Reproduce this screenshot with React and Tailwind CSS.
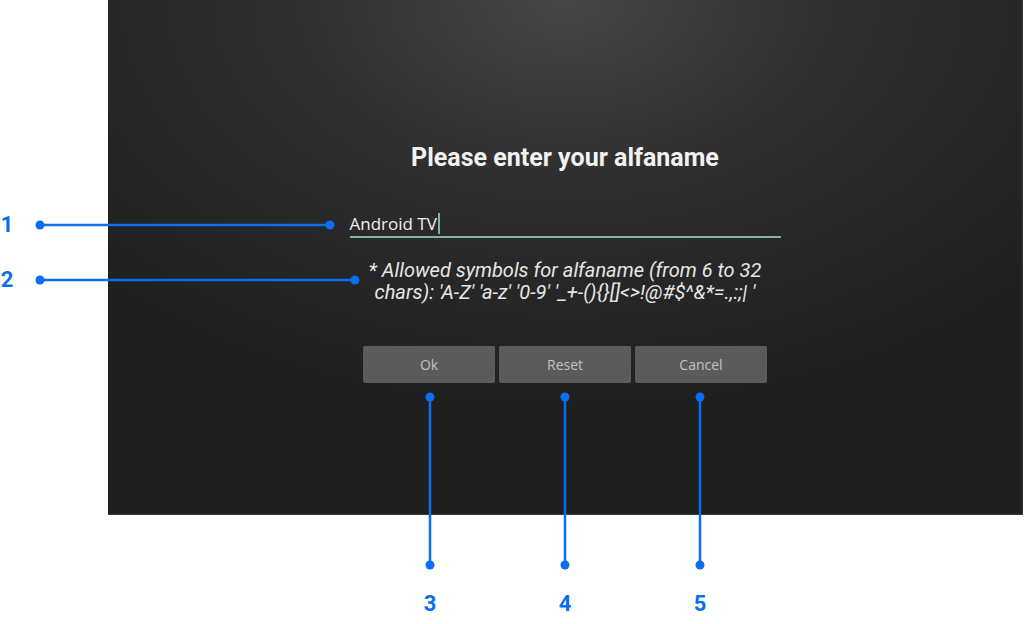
import React from 'react';

const BLUE = '#0a6ef0';

const Callouts = () => (
  <>
    <svg className="absolute left-0 top-0 pointer-events-none" width="1024" height="624">
      <g stroke={BLUE} strokeWidth="2.5" fill={BLUE}>
        <line x1="40" y1="225" x2="330" y2="225" />
        <circle cx="40" cy="225" r="4.5" stroke="none" />
        <circle cx="330" cy="225" r="4.5" stroke="none" />
        <line x1="40" y1="280" x2="355" y2="280" />
        <circle cx="40" cy="280" r="4.5" stroke="none" />
        <circle cx="355" cy="280" r="4.5" stroke="none" />
        {[430, 565, 700].map(x => (
          <g key={x}>
            <line x1={x} y1="397" x2={x} y2="565" />
            <circle cx={x} cy="397" r="4.5" stroke="none" />
            <circle cx={x} cy="565" r="4.5" stroke="none" />
          </g>
        ))}
      </g>
    </svg>
    <div className="absolute left-0 top-[211px] w-[14px] text-center text-[22px] font-bold leading-[28px] text-[#0a6ef0]">1</div>
    <div className="absolute left-0 top-[266px] w-[14px] text-center text-[22px] font-bold leading-[28px] text-[#0a6ef0]">2</div>
    <div className="absolute left-[415px] top-[590px] w-[30px] text-center text-[22px] font-bold leading-[28px] text-[#0a6ef0]">3</div>
    <div className="absolute left-[550px] top-[590px] w-[30px] text-center text-[22px] font-bold leading-[28px] text-[#0a6ef0]">4</div>
    <div className="absolute left-[685px] top-[590px] w-[30px] text-center text-[22px] font-bold leading-[28px] text-[#0a6ef0]">5</div>
  </>
);

const App = () => {
  const buttons = ['Ok', 'Reset', 'Cancel'];
  const symbols = "chars): 'A-Z' 'a-z' '0-9' '_+-(){}[]<>!@#$^&*=.,:;| '";

  return (
    <div className="relative w-[1024px] h-[624px] bg-white overflow-hidden font-['Roboto',sans-serif]">
      <div className="ml-[108px] w-[915px] h-[515px] flex flex-col items-center bg-[radial-gradient(ellipse_70%_80%_at_50%_0%,#464646_0%,#2c2c2c_50%,#1f1f1f_100%)] border-r border-b border-[#3a3a3a]">
        <h1 className="mt-[143px] text-[25px] leading-[30px] font-bold text-[#f2f2f2]">
          Please enter your alfaname
        </h1>

        <div className="mt-[41px] w-[431px] h-[24px] border-b-2 border-[#7fb5a9] flex items-start">
          <span className="font-['Open_Sans',sans-serif] text-[17px] leading-[20px] text-[#eeeeee]">Android TV</span>
          <span className="ml-[1px] w-[2px] h-[21px] -mt-[1px] bg-[#7fb5a9]"></span>
        </div>

        <p className="mt-[21px] text-center italic text-[20px] leading-[22px] text-[#e6e6e6]">
          * Allowed symbols for alfaname (from 6 to 32<br />
          {symbols}
        </p>

        <div className="mt-[43px] flex gap-[4px]">
          {buttons.map(label => (
            <button
              key={label}
              className="w-[132px] h-[37px] rounded-[2px] bg-[#5b5b5b] font-['Open_Sans',sans-serif] text-[14px] text-[#c2c2c2]"
            >
              {label}
            </button>
          ))}
        </div>
      </div>

      <Callouts />
    </div>
  );
};

export default App;
